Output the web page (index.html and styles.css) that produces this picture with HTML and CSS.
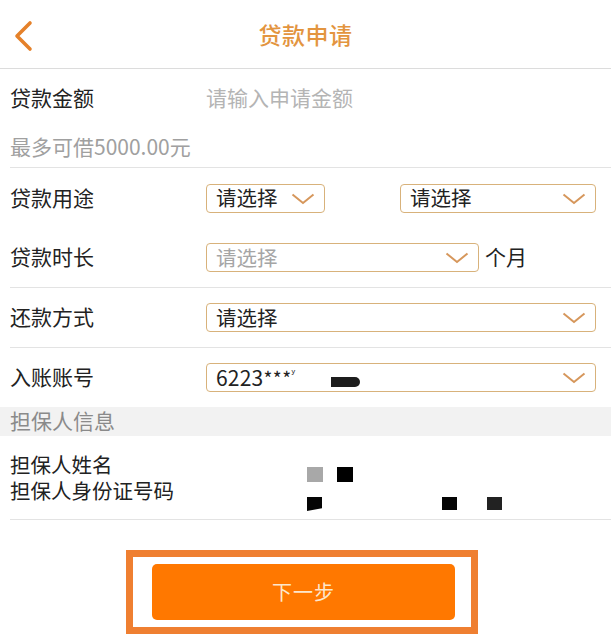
FILE: index.html
```html
<!DOCTYPE html>
<html lang="zh-CN">
<head>
<meta charset="utf-8">
<title>贷款申请</title>
<link rel="stylesheet" href="styles.css">
</head>
<body>
<div class="page">
  <header class="header">
    <div class="back">
      <svg class="back-icon" width="22" height="32" viewBox="0 0 22 32"><path d="M18 3 L5 16 L18 29" fill="none" stroke="#e5812a" stroke-width="3.6" stroke-linecap="round" stroke-linejoin="round"/></svg>
    </div>
    <h1 class="title">贷款申请</h1>
    <div></div>
  </header>

  <div class="row row-amount">
    <div class="label">贷款金额</div>
    <div class="placeholder">请输入申请金额</div>
  </div>
  <div class="row row-hint line">
    <div class="hint">最多可借5000.00元</div>
  </div>

  <div class="row">
    <div class="label">贷款用途</div>
    <div class="select sel-small"><span class="sel-text">请选择</span><svg class="chev" width="26" height="12" viewBox="0 0 26 12"><path d="M2.5 1.5 L13 10 L23.5 1.5" fill="none" stroke="#d6975c" stroke-width="2"/></svg></div>
    <div class="select sel-mid"><span class="sel-text">请选择</span><svg class="chev" width="26" height="12" viewBox="0 0 26 12"><path d="M2.5 1.5 L13 10 L23.5 1.5" fill="none" stroke="#d6975c" stroke-width="2"/></svg></div>
  </div>

  <div class="row line">
    <div class="label">贷款时长</div>
    <div class="select sel-long"><span class="sel-text muted">请选择</span><svg class="chev" width="26" height="12" viewBox="0 0 26 12"><path d="M2.5 1.5 L13 10 L23.5 1.5" fill="none" stroke="#d6975c" stroke-width="2"/></svg></div>
    <div class="unit">个月</div>
  </div>

  <div class="row line">
    <div class="label">还款方式</div>
    <div class="select sel-full"><span class="sel-text">请选择</span><svg class="chev" width="26" height="12" viewBox="0 0 26 12"><path d="M2.5 1.5 L13 10 L23.5 1.5" fill="none" stroke="#d6975c" stroke-width="2"/></svg></div>
  </div>

  <div class="row row-account">
    <div class="label">入账账号</div>
    <div class="select sel-full">
      <span class="acct-group"><span class="acct">6223<span class="stars">***</span><span class="tick">ʸ</span></span><span class="redact-bar"></span></span>
      <svg class="chev" width="26" height="12" viewBox="0 0 26 12"><path d="M2.5 1.5 L13 10 L23.5 1.5" fill="none" stroke="#d6975c" stroke-width="2"/></svg>
    </div>
  </div>

  <div class="section">担保人信息</div>

  <div class="guarantor">
    <div class="g-labels">担保人姓名<br>担保人身份证号码</div>
    <div class="g-values">
      <div class="g-line marks">
        <span class="mark mark-gray"></span>
        <span class="mark mark-black m-30"></span>
      </div>
      <div class="g-line marks">
        <span class="mark2 mark-slant"></span>
        <span class="mark2 m-119"></span>
        <span class="mark2 mark-dark m-30b"></span>
      </div>
    </div>
  </div>

  <div class="actions">
    <div class="outline">
      <button class="next">下一步</button>
    </div>
  </div>
</div>
</body>
</html>
```

FILE: styles.css
```css
* { box-sizing: border-box; }
html, body { margin: 0; padding: 0; background: #fff; }
body {
  font-family: "Noto Sans CJK SC", "Noto Sans", sans-serif;
  color: #222;
  width: 611px;
}
.page { width: 611px; }

.header {
  height: 69px;
  border-bottom: 1px solid #dcdcdc;
  display: grid;
  grid-template-columns: 1fr auto 1fr;
  align-items: center;
}
.back { padding-left: 12px; padding-top: 3px; display: flex; align-items: center; }
.title {
  margin: 0;
  font-size: 23px;
  font-weight: 500;
  color: #e3953f;
  letter-spacing: 0.5px;
  padding-bottom: 1px;
}

.row {
  margin-left: 10px;
  height: 60px;
  display: flex;
  align-items: center;
  font-size: 21px;
}
.row.line { border-bottom: 1px solid #e3e3e3; }
.row-amount { height: 58px; }
.row-hint { height: 41px; padding-bottom: 2px; }
.row-account { height: 59px; }

.label { width: 196px; flex: none; color: #222; padding-bottom: 3px; }
.placeholder { color: #b4b4b4; padding-bottom: 3px; }
.hint { color: #a0a0a0; }

.select {
  height: 29px;
  border: 1.5px solid #d8b27b;
  border-radius: 4px;
  background: #fff;
  display: flex;
  align-items: center;
  justify-content: space-between;
  padding: 0 8px 0 9px;
  font-size: 20.5px;
  color: #222;
  flex: none;
}
.sel-text { padding-bottom: 2px; }
.select .muted { color: #a5a5a5; }
.chev { flex: none; display: block; margin-top: 1px; }
.sel-small { width: 119px; }
.sel-mid { width: 196px; margin-left: 75px; }
.sel-long { width: 273px; }
.sel-full { width: 390px; }
.unit { margin-left: 6px; color: #222; padding-bottom: 3px; }

.acct-group { display: flex; align-items: center; }
.acct { font-size: 21px; letter-spacing: 0.2px; padding-bottom: 2px; }
.stars { font-size: 19px; letter-spacing: 0.5px; }
.tick { font-size: 11px; vertical-align: 9px; }
.redact-bar {
  width: 29px;
  height: 10px;
  background: #1d1d1d;
  border-radius: 0 5px 5px 0;
  margin-left: 36px;
  margin-top: 9px;
}

.section {
  height: 29px;
  background: #f2f2f2;
  color: #8a8a8a;
  font-size: 21px;
  line-height: 27px;
  padding-left: 10px;
}

.guarantor {
  margin-left: 10px;
  padding-top: 15px;
  height: 84px;
  border-bottom: 1px solid #e3e3e3;
  display: flex;
  font-size: 20.5px;
}
.g-labels { width: 297px; flex: none; line-height: 26px; }
.g-line { height: 26px; line-height: 26px; }
.g-values { flex: 1; }
.marks { display: flex; align-items: flex-start; }
.mark { width: 16px; height: 15px; margin-top: 16px; }
.mark-gray { background: #a8a8a8; }
.mark-black { background: #000; }
.m-30 { margin-left: 14px; }
.mark2 { width: 15px; height: 13px; margin-top: 20px; background: #050505; }
.mark-slant { clip-path: polygon(0 0, 100% 0, 100% 80%, 0 100%); height: 14px; }
.m-119 { margin-left: 120px; }
.mark-dark { background: #222; }
.m-30b { margin-left: 30px; }

.actions {
  padding-top: 30px;
  padding-left: 126px;
}
.outline {
  width: 352px;
  height: 84px;
  border: 7px solid #ef7f31;
  padding: 7px 16px 7px 19px;
}
.next {
  display: block;
  width: 303px;
  height: 56px;
  border: none;
  border-radius: 5px;
  background: #ff7800;
  color: #fde7cc;
  font-family: "Noto Sans CJK SC", "Noto Sans", sans-serif;
  font-size: 20px;
  padding: 0 0 1px 0;
  letter-spacing: 1px;
}
```
